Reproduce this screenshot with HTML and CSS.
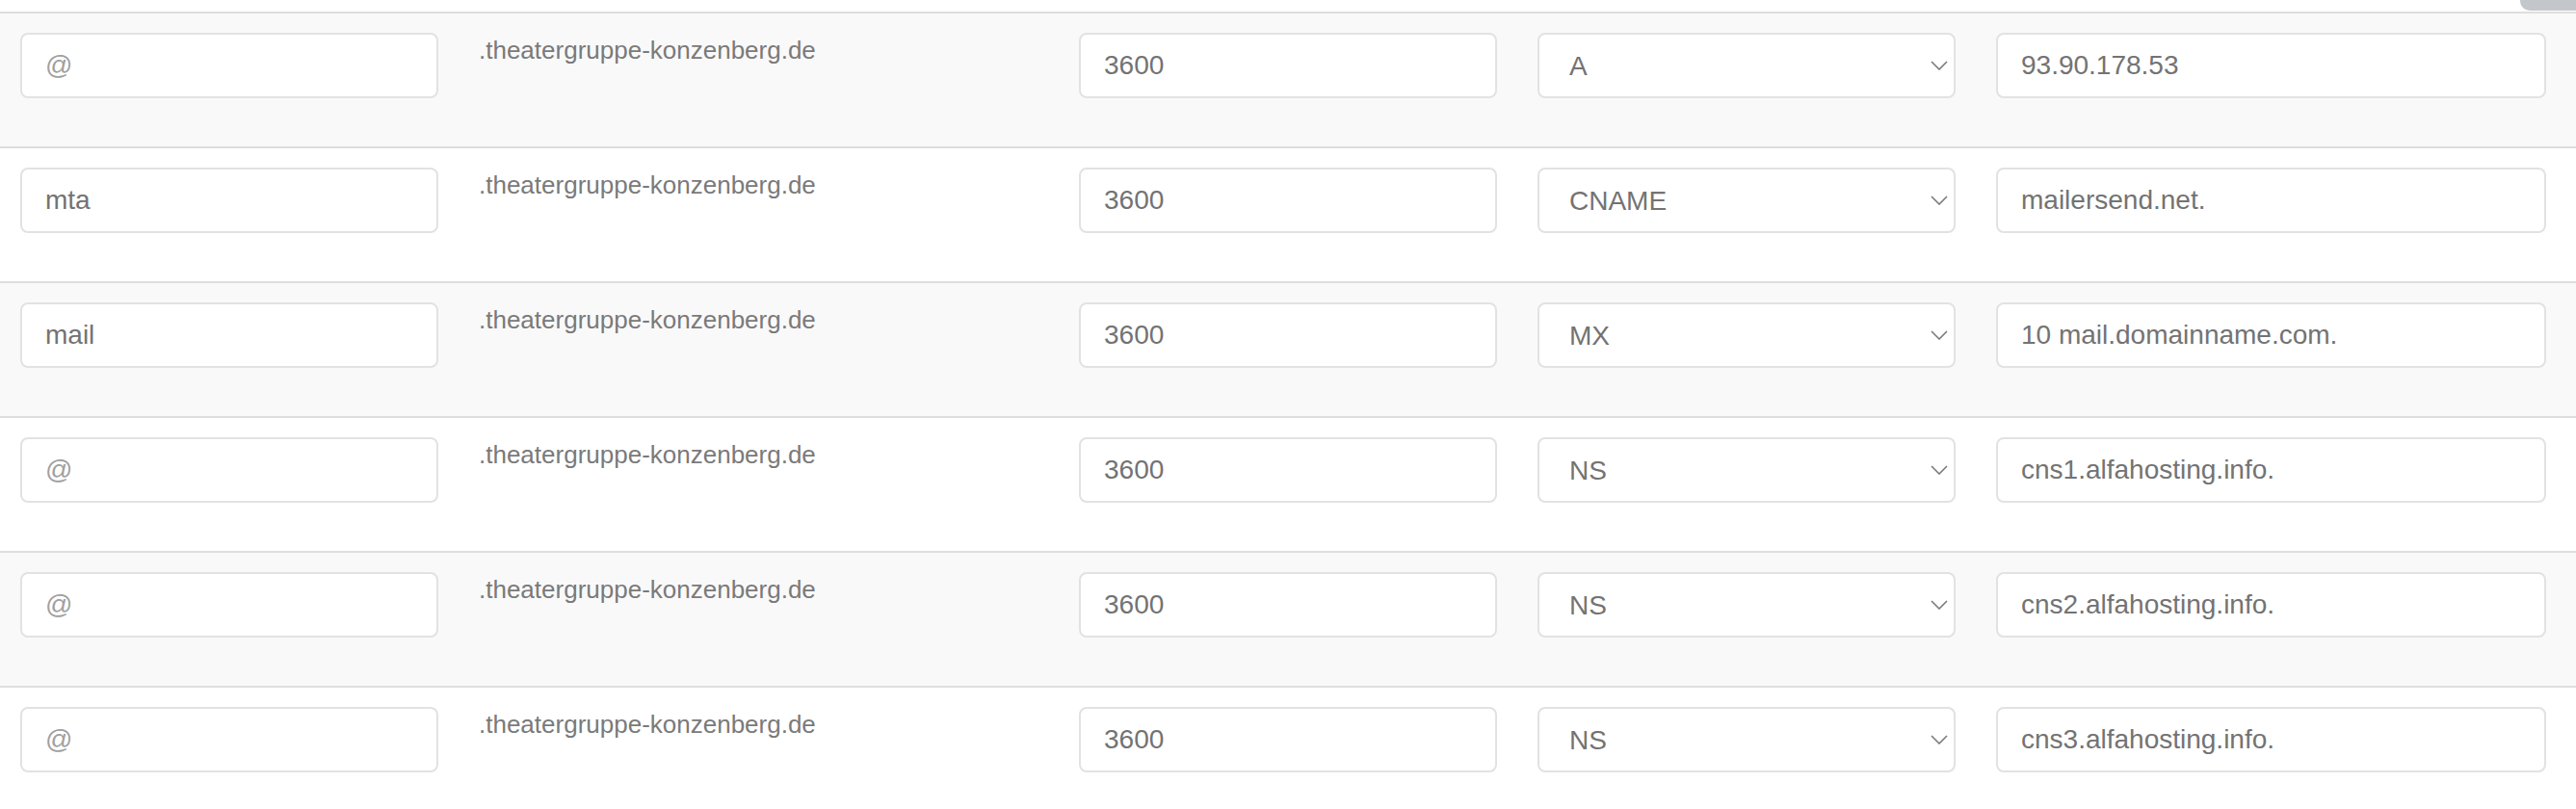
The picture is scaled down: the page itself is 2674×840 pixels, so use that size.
FILE: index.html
```html
<!DOCTYPE html>
<html lang="de">
<head>
<meta charset="utf-8">
<title>DNS-Einträge</title>
<link rel="stylesheet" href="styles.css">
</head>
<body>
<div class="page">
  <div class="top-tab"></div>
  <div class="records">
    <div class="row striped">
      <div class="cell"><input class="field" type="text" placeholder="@" value=""></div>
      <div class="cell domain">.theatergruppe-konzenberg.de</div>
      <div class="cell"><input class="field" type="text" value="3600"></div>
      <div class="cell"><div class="select-wrap"><select class="field select"><option>A</option></select><svg class="chev" width="18" height="10" viewBox="0 0 18 10"><polyline points="1,1 9,9 17,1" fill="none" stroke="#7a7a7a" stroke-width="1.6"/></svg></div></div>
      <div class="cell last"><input class="field" type="text" value="93.90.178.53"></div>
    </div>
    <div class="row">
      <div class="cell"><input class="field" type="text" placeholder="@" value="mta"></div>
      <div class="cell domain">.theatergruppe-konzenberg.de</div>
      <div class="cell"><input class="field" type="text" value="3600"></div>
      <div class="cell"><div class="select-wrap"><select class="field select"><option>CNAME</option></select><svg class="chev" width="18" height="10" viewBox="0 0 18 10"><polyline points="1,1 9,9 17,1" fill="none" stroke="#7a7a7a" stroke-width="1.6"/></svg></div></div>
      <div class="cell last"><input class="field" type="text" value="mailersend.net."></div>
    </div>
    <div class="row striped">
      <div class="cell"><input class="field" type="text" placeholder="@" value="mail"></div>
      <div class="cell domain">.theatergruppe-konzenberg.de</div>
      <div class="cell"><input class="field" type="text" value="3600"></div>
      <div class="cell"><div class="select-wrap"><select class="field select"><option>MX</option></select><svg class="chev" width="18" height="10" viewBox="0 0 18 10"><polyline points="1,1 9,9 17,1" fill="none" stroke="#7a7a7a" stroke-width="1.6"/></svg></div></div>
      <div class="cell last"><input class="field" type="text" value="10 mail.domainname.com."></div>
    </div>
    <div class="row">
      <div class="cell"><input class="field" type="text" placeholder="@" value=""></div>
      <div class="cell domain">.theatergruppe-konzenberg.de</div>
      <div class="cell"><input class="field" type="text" value="3600"></div>
      <div class="cell"><div class="select-wrap"><select class="field select"><option>NS</option></select><svg class="chev" width="18" height="10" viewBox="0 0 18 10"><polyline points="1,1 9,9 17,1" fill="none" stroke="#7a7a7a" stroke-width="1.6"/></svg></div></div>
      <div class="cell last"><input class="field" type="text" value="cns1.alfahosting.info."></div>
    </div>
    <div class="row striped">
      <div class="cell"><input class="field" type="text" placeholder="@" value=""></div>
      <div class="cell domain">.theatergruppe-konzenberg.de</div>
      <div class="cell"><input class="field" type="text" value="3600"></div>
      <div class="cell"><div class="select-wrap"><select class="field select"><option>NS</option></select><svg class="chev" width="18" height="10" viewBox="0 0 18 10"><polyline points="1,1 9,9 17,1" fill="none" stroke="#7a7a7a" stroke-width="1.6"/></svg></div></div>
      <div class="cell last"><input class="field" type="text" value="cns2.alfahosting.info."></div>
    </div>
    <div class="row">
      <div class="cell"><input class="field" type="text" placeholder="@" value=""></div>
      <div class="cell domain">.theatergruppe-konzenberg.de</div>
      <div class="cell"><input class="field" type="text" value="3600"></div>
      <div class="cell"><div class="select-wrap"><select class="field select"><option>NS</option></select><svg class="chev" width="18" height="10" viewBox="0 0 18 10"><polyline points="1,1 9,9 17,1" fill="none" stroke="#7a7a7a" stroke-width="1.6"/></svg></div></div>
      <div class="cell last"><input class="field" type="text" value="cns3.alfahosting.info."></div>
    </div>
  </div>
</div>
</body>
</html>
```

FILE: styles.css
```css
* { box-sizing: border-box; }
html, body {
  margin: 0;
  padding: 0;
  background: #ffffff;
  font-family: "Liberation Sans", Arial, Helvetica, sans-serif;
  overflow: hidden;
}
.page {
  position: relative;
  width: 2674px;
  height: 840px;
  padding-top: 12px;
}
.top-tab {
  position: absolute;
  top: 0;
  right: 0;
  width: 58px;
  height: 11px;
  background: #c3c6cb;
  border-bottom-left-radius: 10px;
}
.records {
  display: flex;
  flex-direction: column;
}
.row {
  display: grid;
  grid-template-columns: 476px 623px 476px 476px 1fr;
  height: 140px;
  border-top: 2px solid #dedede;
  background: #ffffff;
}
.row.striped { background: #f9f9f9; }
.cell {
  padding: 20px 21px;
}
.cell.last { padding-right: 31px; }
.domain {
  font-size: 26px;
  line-height: 37px;
  color: #7a7a7a;
  white-space: nowrap;
}
.field {
  display: block;
  width: 100%;
  height: 68px;
  margin: 0;
  padding: 0 24px;
  border: 2px solid #e2e2e2;
  border-radius: 8px;
  background: #ffffff;
  font-family: "Liberation Sans", Arial, Helvetica, sans-serif;
  font-size: 28px;
  color: #737373;
  outline: none;
}
.field::placeholder { color: #a0a0a0; }
.select-wrap { position: relative; }
.select {
  -webkit-appearance: none;
  appearance: none;
  padding-left: 31px;
}
.chev {
  position: absolute;
  right: 8px;
  top: 29px;
  pointer-events: none;
}
```
